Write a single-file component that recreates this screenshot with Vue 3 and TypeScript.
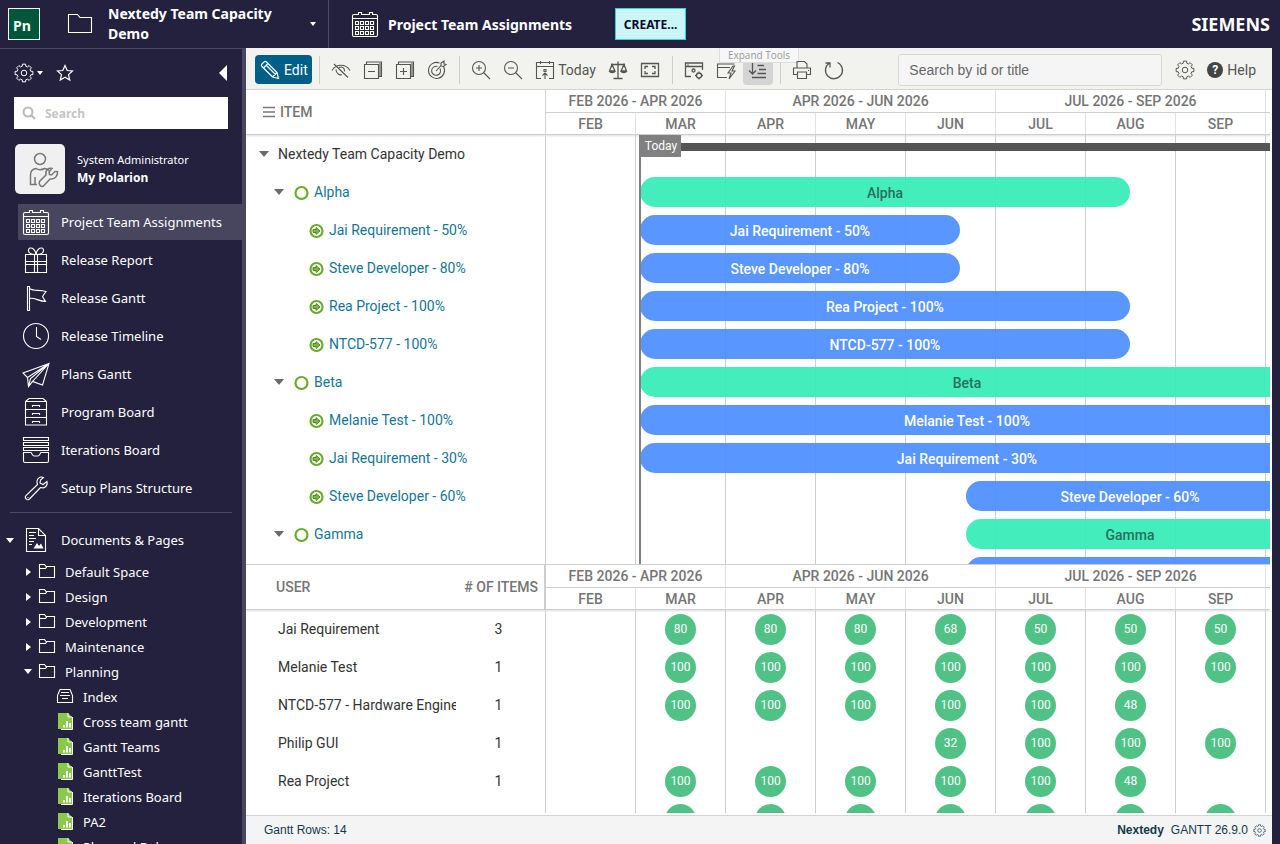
<script setup lang="ts">
import { h, ref } from 'vue'

type Shape = { d: string; size: number; solid?: string; w?: number }

const circle = (x: number, y: number, r: number) =>
  `M${x - r} ${y}a${r} ${r} 0 1 0 ${2 * r} 0a${r} ${r} 0 1 0 ${-2 * r} 0z`

const cog = (c: number, outer: number, inner: number, hole: number) => {
  const pts: string[] = []
  for (let i = 0; i < 8; i++) {
    const a = (i * Math.PI) / 4
    const at = (r: number, o: number) =>
      `${(c + r * Math.cos(a + o)).toFixed(2)} ${(c + r * Math.sin(a + o)).toFixed(2)}`
    pts.push(at(inner, -0.26), at(outer, -0.18), at(outer, 0.18), at(inner, 0.26))
  }
  return `M${pts.join('L')}z${circle(c, c, hole)}`
}

const squares = (x0: number, y0: number) => {
  let d = ''
  for (let r = 0; r < 3; r++)
    for (let c = 0; c < 4; c++) d += `M${x0 + c * 5} ${y0 + r * 5}h3v3h-3z`
  return d
}

const shapes: Record<string, Shape> = {
  calendar: {
    size: 28,
    d: 'M4 4.5H7.500V2.500H10.500V4.500H18.500V2.500H21.500V4.500H25q1.500 0 1.500 1.500V25q0 1.500-1.500 1.500H3q-1.500 0-1.500-1.500V6q0-1.500 1.500-1.500zM1.500 8.500H26.500' + squares(4.5, 11.5),
  },
  gift: {
    size: 28,
    d: 'M3.500 8.500h21v18h-21zM3.500 15.500h21M3.500 18.500h21M12.500 8.500v18M15.500 8.500v18M14 8.500C9 8.500 6 7 6.500 4C7.500 0 13 2 14 8.500C15 2 20.500 0 21.500 4C22 7 19 8.500 14 8.500z',
  },
  flag: { size: 28, d: 'M5.500 2.500h2v24h-2zM7.500 4.500C12 7.500 17 5.500 24 7.500L20.500 12.500L23.500 17.500C17 17.500 12 13 7.500 14.500' },
  clock: { size: 28, d: circle(14, 14, 12.5) + 'M14.500 5v9.500l4.500 3' },
  plane: { size: 28, d: 'M27 3.500L1 13L5.500 17.500L6.500 26.500L10.500 21.500L20.500 25zM27 3.500L5.500 17.500M27 3.500L8.500 18.500L6.500 26.500M27 3.500L10.500 21.500' },
  cabinet: { size: 28, d: 'M3.500 3.500L7 .5H21L24.500 3.500V27H3.500zM3.500 3.500h21M3.500 11.500h21M3.500 19.500h21M10.500 9V7.500h7V9M10.500 17v-1.500h7V17M10.500 25v-1.500h7V25' },
  inbox: { size: 28, d: 'M1.500 1.500h25v3h-25zM1.500 6.500h25v3h-25zM1.500 11.500h25v3h-25zM1.500 16.500H9C10 17 10 20 12 20H16C18 20 18 17 19 16.500H26.500V25q0 1.500-1.500 1.500H3q-1.500 0-1.500-1.500z' },
  wrench: { size: 28, d: 'M21.500 3.500C18 2 13.500 5 15.500 10.500L4 21.500C2 24 5 27 7.500 25L18.500 13.500C22.500 15 26 12 25 7.500L21 10.500L18 9L18.500 6zM5.500 23.500h1' },
  document: {
    size: 28,
    d: 'M4.500 2.500H16.500L23.500 9.500V25.500H4.500zM16.500 2.500V9.500H23.500M7 6.500h7M7 9.500h5M7 12.500h7M7 15.500h5M7 18.500h3',
    solid: 'M11.500 22.500L15 17L17 20L19 17.500L21.500 22.500z',
  },
  folder: { size: 18, d: 'M1.500 1.500H6.500L8 3.500H16.500V14.500H1.500zM1.500 5.500H7.500L9 3.500' },
  bigFolder: { size: 26, d: 'M1.500 3.500H10.500L13 6.500H24.500V21.500H1.500z' },
  index: { size: 18, d: 'M1.500 7.500L4 1.500H14L16.500 7.500V14.500H1.500zM5 4.500h8M4 7.500h10M6 10.500h6' },
  gear: { size: 20, d: cog(10, 9, 7, 2.8), w: 1 },
  star: { size: 18, d: 'M9 1.500L11.200 6.500L16.500 7L12.500 10.600L13.700 16L9 13.200L4.300 16L5.500 10.600L1.500 7L6.800 6.500z', w: 1.2 },
  magnifier: { size: 14, d: circle(6, 6, 4.5) + 'M9.500 9.500L13 13', w: 2 },
  person: {
    size: 34,
    d: circle(17, 8, 5.5) + 'M14 33.500H7.500V24C7.500 19.500 10 18 13 17.500C15 19 19 19 21.500 17.500C23.500 17.500 25 18.500 26 19.500M12 26v7.500M32 20.500L28.500 24L26.500 23.500L26 21L29 17.500C25.500 16.500 22 19 23 24L16.500 30.500C15.500 33.500 18 36.500 20.500 35L27 28C31.500 28.500 35 25.500 34.500 20.500z',
    w: 1.5,
  },
  pencil: { size: 20, d: 'M1.500 4.500L4.500 1.500Q5.500 1 6.500 2L17 12.500L18.500 18.500L12.500 17L2 6.500Q1 5.500 1.500 4.500zM4 7.500L7.500 4M12.500 17L17 12.500M6.500 5.500L15.500 14.500', w: 1.2 },
  eye: { size: 20, d: 'M1 10.500C5 3.500 15 3.500 19 10.500M3 4L17 17.500M5 9.500C5 14 9 15.500 11 14.500M8 7.500C11 6 14 8 13.500 11.500' },
  minusBox: { size: 20, d: 'M1.500 4.500h14v14h-14zM5 11.500h7M3.500 4.500V2H18.500V16.500H15.500M17 3V17' },
  plusBox: { size: 20, d: 'M1.500 4.500h14v14h-14zM5 11.500h7M8.500 8v7M3.500 4.500V2H18.500V16.500H15.500M17 3V17' },
  target: { size: 20, d: 'M16.500 6.500A8 8 0 1 1 12.500 3M13 8.500A4.500 4.500 0 1 1 10.500 6.500M9 11L14 5.500V3L17 1V4L19 4.500L16.500 6.500L14 6' },
  zoomIn: { size: 20, d: circle(8, 8, 6.5) + 'M12.500 12.500L19 19M5 8h6M8 5v6' },
  zoomOut: { size: 20, d: circle(8, 8, 6.5) + 'M12.500 12.500L19 19M5 8h6' },
  today: { size: 20, d: 'M6 18.500H1.500V2.500H18.500V18.500H14M1.500 6.500H18.500M5.500 1v3M14.500 1v3M9 9.500h2v2H9zM10 19V13M7.500 15.500L10 13L12.500 15.500' },
  scales: { size: 20, d: 'M10 1.500V18M5.500 18.500h9M3 4.500H17M4 4.500L1.500 11H7zM16 4.500L13 11H18.500zM1.500 11C2 13 6.500 13 7 11M13 11C13.500 13 18 13 18.500 11', w: 1.3 },
  fit: { size: 20, d: 'M1.500 3.500h17v13h-17zM5 9V6.500H8M12 6.500h3V9M15 11v2.500H12M8 13.500H5V11', w: 1.3 },
  windowGear: { size: 20, d: 'M7 16.500H1.500V3H18.500V10M1.500 6.500H18.500M3.500 5h1' + circle(9.5, 10.5, 1.5) + circle(15, 15.5, 2.5) + 'M15 11.500v1.500M15 18v1.500M11 15.500h1.500M17.500 15.500H19', w: 1.3 },
  flash: { size: 20, d: 'M11 17.500H1.500V4H18.500M1.500 7.500H14M17 6L12 13H15L13 19L19 11H16L18.500 6z' },
  sort: { size: 20, d: 'M4.500 3V14M1 10.500L4.500 14L8 10.500M9.500 5.500H16M11 9.500H18M9.500 13.500H18M4 17.500H18', w: 1.3 },
  print: { size: 20, d: 'M5 8V1.500H12.500L15 4V8M5 14.500H1.500V8H18.500V14.500H15M5.500 12h9v6.500h-9zM16 10.500h1' },
  refresh: { size: 20, d: 'M13.500 2.500A8.500 8.500 0 1 1 5.500 3M1.500 3H6V7.500', w: 1.3 },
}

const Icon = (props: { name: string; size?: number }) => {
  const s = shapes[props.name]
  const px = props.size ?? s.size
  return h('svg', { class: 'icon', viewBox: `0 0 ${s.size} ${s.size}`, width: px, height: px, 'aria-hidden': 'true' }, [
    h('path', { d: s.d, fill: 'none', stroke: 'currentColor', 'stroke-width': s.w ?? 1.1 }),
    s.solid ? h('path', { d: s.solid, fill: 'currentColor' }) : null,
  ])
}
Icon.props = ['name', 'size']

const nav = [
  { label: 'Project Team Assignments', icon: 'calendar' },
  { label: 'Release Report', icon: 'gift' },
  { label: 'Release Gantt', icon: 'flag' },
  { label: 'Release Timeline', icon: 'clock' },
  { label: 'Plans Gantt', icon: 'plane' },
  { label: 'Program Board', icon: 'cabinet' },
  { label: 'Iterations Board', icon: 'inbox' },
  { label: 'Setup Plans Structure', icon: 'wrench' },
]
const active = ref(0)
const spaces = ['Default Space', 'Design', 'Development', 'Maintenance', 'Planning']
const pages = ['Cross team gantt', 'Gantt Teams', 'GanttTest', 'Iterations Board', 'PA2', 'Plan and Roles']

type Tool = { icon?: string; label?: string; text?: string; pressed?: boolean }
const tools: Tool[] = [
  { icon: 'eye', label: 'Hide' },
  { icon: 'minusBox', label: 'Collapse all' },
  { icon: 'plusBox', label: 'Expand all' },
  { icon: 'target', label: 'Focus' },
  {},
  { icon: 'zoomIn', label: 'Zoom in' },
  { icon: 'zoomOut', label: 'Zoom out' },
  { icon: 'today', label: 'Today', text: 'Today' },
  { icon: 'scales', label: 'Balance' },
  { icon: 'fit', label: 'Fit' },
  {},
  { icon: 'windowGear', label: 'View settings' },
  { icon: 'flash', label: 'Quick actions' },
  { icon: 'sort', label: 'Expand Tools', pressed: true },
  {},
  { icon: 'print', label: 'Print' },
  { icon: 'refresh', label: 'Refresh' },
]

const quarters = [
  { label: 'FEB 2026 - APR 2026', span: 2 },
  { label: 'APR 2026 - JUN 2026', span: 3 },
  { label: 'JUL 2026 - SEP 2026', span: 3 },
]
const months = ['FEB', 'MAR', 'APR', 'MAY', 'JUN', 'JUL', 'AUG', 'SEP']

type Row = { label: string; level: number; start: number; end: number }
const rows: Row[] = [
  { label: 'Nextedy Team Capacity Demo', level: 0, start: 94, end: 748 },
  { label: 'Alpha', level: 1, start: 94, end: 584 },
  { label: 'Jai Requirement - 50%', level: 2, start: 94, end: 414 },
  { label: 'Steve Developer - 80%', level: 2, start: 94, end: 414 },
  { label: 'Rea Project - 100%', level: 2, start: 94, end: 584 },
  { label: 'NTCD-577 - 100%', level: 2, start: 94, end: 584 },
  { label: 'Beta', level: 1, start: 94, end: 748 },
  { label: 'Melanie Test - 100%', level: 2, start: 94, end: 748 },
  { label: 'Jai Requirement - 30%', level: 2, start: 94, end: 748 },
  { label: 'Steve Developer - 60%', level: 2, start: 420, end: 748 },
  { label: 'Gamma', level: 1, start: 420, end: 748 },
  { label: '', level: 2, start: 420, end: 748 },
]
const kinds = ['project', 'team', 'member']

type Load = { user: string; items: number | null; load: (number | string | null)[] }
const loads: Load[] = [
  { user: 'Jai Requirement', items: 3, load: [null, 80, 80, 80, 68, 50, 50, 50] },
  { user: 'Melanie Test', items: 1, load: [null, 100, 100, 100, 100, 100, 100, 100] },
  { user: 'NTCD-577 - Hardware Engineer', items: 1, load: [null, 100, 100, 100, 100, 100, 48, null] },
  { user: 'Philip GUI', items: 1, load: [null, null, null, null, 32, 100, 100, 100] },
  { user: 'Rea Project', items: 1, load: [null, 100, 100, 100, 100, 100, 48, null] },
  { user: 'Steve Developer', items: null, load: [null, '', '', '', '', '', '', ''] },
]
</script>

<template>
  <div class="shell">
    <header class="topbar">
      <div class="project">
        <span class="logo">Pn</span>
        <Icon name="bigFolder" />
        <button class="project-name">Nextedy Team Capacity Demo</button>
        <i class="tri down small"></i>
      </div>
      <Icon name="calendar" class="page-icon" />
      <h1>Project Team Assignments</h1>
      <button class="create">CREATE...</button>
      <span class="brand">SIEMENS</span>
    </header>

    <aside class="sidebar">
      <div class="side-tools">
        <button aria-label="Settings"><Icon name="gear" /><i class="tri down small"></i></button>
        <button aria-label="Favorites"><Icon name="star" /></button>
        <button class="collapse" aria-label="Collapse sidebar"><i class="tri back"></i></button>
      </div>
      <label class="side-search">
        <Icon name="magnifier" />
        <input type="search" placeholder="Search" aria-label="Search" />
      </label>
      <a href="#" class="profile">
        <span class="avatar"><Icon name="person" /></span>
        <span>System Administrator<b>My Polarion</b></span>
      </a>
      <nav class="nav">
        <a v-for="(n, i) in nav" :key="n.label" href="#" :class="{ active: active === i }" @click.prevent="active = i">
          <Icon :name="n.icon" />{{ n.label }}
        </a>
      </nav>
      <hr />
      <a href="#" class="docs"><i class="tri down"></i><Icon name="document" />Documents &amp; Pages</a>
      <ul class="spaces">
        <li v-for="s in spaces" :key="s">
          <a href="#"><i class="tri" :class="s === 'Planning' ? 'down' : 'right'"></i><Icon name="folder" />{{ s }}</a>
        </li>
      </ul>
      <ul class="pages">
        <li><a href="#"><Icon name="index" />Index</a></li>
        <li v-for="p in pages" :key="p">
          <a href="#">
            <svg class="icon" viewBox="0 0 18 18" width="18" height="18" aria-hidden="true">
              <path d="M2 0h10l4 4v12H2z" fill="#8bc94a" />
              <path d="M12 0v4h4M16.500 4v12.500H5" fill="none" stroke="#fff" />
              <path d="M7 12h2v2.500H7zM10 8h2v6.500h-2zM13 10h2v4.500h-2z" fill="#fff" />
            </svg>{{ p }}
          </a>
        </li>
      </ul>
    </aside>

    <main class="main">
      <div class="toolbar">
        <button class="edit"><Icon name="pencil" />Edit</button>
        <span class="sep"></span>
        <template v-for="(t, i) in tools" :key="i">
          <button v-if="t.icon" class="tool" :class="{ pressed: t.pressed, wide: t.text }" :aria-label="t.label">
            <Icon :name="t.icon" />{{ t.text }}
            <span v-if="t.pressed" class="tip">Expand Tools</span>
          </button>
          <span v-else class="sep"></span>
        </template>
        <input class="find" type="text" placeholder="Search by id or title" aria-label="Search by id or title" />
        <button class="tool" aria-label="Settings"><Icon name="gear" /></button>
        <button class="help"><span>?</span>Help</button>
      </div>

      <section class="gantt">
        <div class="tree">
          <div class="tree-head">
            <svg class="icon" viewBox="0 0 12 12" width="12" height="12" aria-hidden="true">
              <path d="M0 1.500h12M0 6h12M0 10.500h12" stroke="#777" stroke-width="1.500" />
            </svg>ITEM
          </div>
          <ul>
            <li v-for="(r, i) in rows" :key="i" :style="{ paddingLeft: 10 + 15 * r.level + 'px' }">
              <button v-if="r.level < 2" class="twist" aria-label="Toggle"><i class="tri down"></i></button>
              <span v-else class="twist"></span>
              <svg v-if="r.level" class="icon" viewBox="0 0 15 15" width="15" height="15" aria-hidden="true">
                <circle cx="7.500" cy="8" r="6" fill="#fff" stroke="#6aaa2e" stroke-width="2.200" />
                <path v-if="r.level === 2" d="M4 6.500h3V4.500l4 3.500L7 11.500V9.500H4z" fill="#7ab648" stroke="#4e8c1c" />
              </svg>
              <a v-if="r.level" href="#">{{ r.label }}</a>
              <span v-else>{{ r.label }}</span>
            </li>
          </ul>
        </div>
        <div class="chart">
          <div class="scale quarters">
            <span v-for="q in quarters" :key="q.label" :class="'span-' + q.span">{{ q.label }}</span>
          </div>
          <div class="scale months"><span v-for="m in months" :key="m">{{ m }}</span></div>
          <div class="canvas">
            <div class="now"><span>Today</span></div>
            <div v-for="(r, i) in rows" :key="i" class="lane">
              <div class="bar" :class="kinds[r.level]" :style="{ left: r.start + 'px', width: r.end - r.start + 'px' }">
                <template v-if="r.level">{{ r.label }}</template>
              </div>
            </div>
          </div>
        </div>
      </section>

      <section class="resources">
        <table>
          <colgroup>
            <col class="c-user" /><col class="c-items" />
            <col v-for="m in months" :key="m" class="c-month" /><col />
          </colgroup>
          <thead>
            <tr>
              <th rowspan="2" class="h-user">USER</th>
              <th rowspan="2" class="h-items"># OF ITEMS</th>
              <th v-for="q in quarters" :key="q.label" :colspan="q.span" class="h-quarter">{{ q.label }}</th>
              <th class="h-quarter rest"></th>
            </tr>
            <tr>
              <th v-for="m in months" :key="m" class="h-month">{{ m }}</th>
              <th class="h-month rest"></th>
            </tr>
          </thead>
          <tbody>
            <tr v-for="l in loads" :key="l.user">
              <td class="user"><div>{{ l.user }}</div></td>
              <td class="items">{{ l.items }}</td>
              <td v-for="(v, i) in l.load" :key="i" class="load"><span v-if="v !== null">{{ v }}</span></td>
              <td></td>
            </tr>
          </tbody>
        </table>
      </section>

      <footer class="status">
        <span>Gantt Rows: 14</span>
        <span class="version"><b>Nextedy</b>GANTT 26.9.0<Icon name="gear" :size="13" /></span>
      </footer>
    </main>
  </div>
</template>

<style>
body {
  margin: 0;
  background: #23213d;
}
</style>

<style scoped>
.shell {
  display: grid;
  grid-template: 48px minmax(0, 1fr) / 246px minmax(0, 1fr);
  height: 100vh;
  overflow: hidden;
  background: #23213d;
  color: #fff;
  font-family: 'Noto Sans', 'Open Sans', sans-serif;
  font-size: 13px;
}
.shell *,
.shell *::before {
  box-sizing: border-box;
}
button {
  padding: 0;
  border: 0;
  background: none;
  color: inherit;
  font: inherit;
  cursor: pointer;
}
a {
  color: inherit;
  text-decoration: none;
}
ul {
  margin: 0;
  padding: 0;
  list-style: none;
}
.icon {
  flex: none;
  display: block;
  overflow: visible;
}
.tri {
  flex: none;
  width: 0;
  height: 0;
}
.tri.down {
  border: 4px solid transparent;
  border-top: 5px solid currentColor;
  border-bottom: 0;
}
.tri.down.small {
  border-width: 4px 3px 0;
}
.tri.right {
  border: 4px solid transparent;
  border-left: 5px solid currentColor;
  border-right: 0;
}
.tri.back {
  border: 8px solid transparent;
  border-right: 8px solid #fff;
  border-left: 0;
}

.topbar {
  grid-column: 1 / -1;
  display: flex;
  align-items: center;
  padding: 0 10px 0 8px;
}
.project {
  display: flex;
  align-items: center;
  width: 321px;
  height: 48px;
  padding-right: 12px;
  border-right: 1px solid #4b4963;
}
.logo {
  width: 32px;
  height: 32px;
  margin-right: 27px;
  padding: 7px 0 0 4px;
  border: 1px solid #fff;
  background: #00573a;
  font: 700 14px/20px 'Open Sans', sans-serif;
}
.project-name {
  flex: 1;
  margin-left: 15px;
  padding-right: 20px;
  font-size: 14px;
  line-height: 20px;
  font-weight: 700;
  text-align: left;
}
.page-icon {
  margin: 0 9px 0 22px;
}
h1 {
  margin: 0 43px 0 0;
  font-size: 14px;
  font-weight: 700;
}
.create {
  width: 71px;
  height: 32px;
  border: 1px solid #2fd8d4;
  background: #cbf6f5;
  color: #0a0a30;
  font-size: 12px;
  font-weight: 700;
}
.brand {
  margin-left: auto;
  font-size: 18px;
  font-weight: 700;
}

.sidebar {
  overflow: hidden;
  border-top: 1px solid #4b4963;
  border-right: 4px solid #48455f;
}
.side-tools {
  display: flex;
  align-items: center;
  gap: 13px;
  height: 48px;
  padding: 0 15px 0 14px;
}
.side-tools button {
  display: flex;
  align-items: center;
  gap: 3px;
}
.side-tools .collapse {
  margin-left: auto;
}
.side-search {
  display: flex;
  align-items: center;
  gap: 7px;
  height: 32px;
  margin: 0 14px;
  padding: 0 8px;
  background: #fff;
  color: #bbb;
}
.side-search input {
  flex: 1;
  min-width: 0;
  border: 0;
  outline: 0;
  background: none;
  font: 700 12px 'Noto Sans', sans-serif;
}
.side-search input::placeholder {
  color: #c4c4c4;
}
.profile {
  display: flex;
  align-items: center;
  gap: 12px;
  margin: 15px 15px 10px;
  font-size: 11px;
  line-height: 18px;
}
.profile b {
  display: block;
  font-size: 12px;
}
.avatar {
  display: flex;
  width: 50px;
  height: 50px;
  padding: 7px 8px;
  border-radius: 5px;
  background: #f0f0f0;
  color: #777;
}
.nav {
  display: flex;
  flex-direction: column;
  gap: 2px;
  padding-left: 18px;
}
.nav a {
  display: flex;
  align-items: center;
  gap: 11px;
  height: 36px;
  padding-left: 4px;
}
.nav .active {
  background: #48465f;
}
hr {
  height: 1px;
  margin: 6px 10px 8px;
  border: 0;
  background: #4b4963;
}
.docs {
  display: flex;
  align-items: center;
  height: 38px;
  padding-left: 6px;
}
.docs .icon {
  margin: 0 11px 0 8px;
}
.spaces a,
.pages a {
  display: flex;
  align-items: center;
  height: 25px;
}
.spaces a {
  padding-left: 24px;
}
.spaces .tri {
  margin: 0 7px 0 2px;
}
.spaces .tri.down {
  margin: 0 6px 0 0;
}
.spaces .icon {
  margin-right: 9px;
}
.pages a {
  gap: 9px;
  padding-left: 56px;
}

.main {
  display: flex;
  flex-direction: column;
  min-width: 0;
  margin-right: 8px;
  background: #fff;
  color: #333;
  font: 14px/20px Roboto, sans-serif;
}
.toolbar {
  display: flex;
  align-items: center;
  flex: none;
  height: 42px;
  padding: 2px 16px 0 9px;
  border-bottom: 1px solid #d3d3d0;
  background: #f2f2ee;
  color: #555;
}
.edit {
  display: flex;
  align-items: center;
  gap: 4px;
  width: 57px;
  height: 29px;
  margin-right: 1px;
  padding-left: 5px;
  border-radius: 4px;
  background: #005f87;
  color: #fff;
}
.sep {
  flex: none;
  width: 1px;
  height: 28px;
  margin: 0 5px 0 6px;
  background: #ccc;
}
.tool {
  position: relative;
  display: flex;
  flex: none;
  align-items: center;
  justify-content: center;
  gap: 3px;
  width: 32px;
  height: 30px;
}
.tool.wide {
  width: 73px;
}
.tool.pressed::before {
  content: '';
  position: absolute;
  inset: 0 1px;
  border-radius: 4px;
  background: #d4d4d4;
}
.tool.pressed .icon {
  position: relative;
}
.tip {
  position: absolute;
  top: -7px;
  left: -23px;
  width: 80px;
  border: 1px solid #ddd;
  border-top: 0;
  background: #f7f7f7;
  color: #999;
  font: 10px/14px 'Open Sans', sans-serif;
}
.find {
  width: 264px;
  height: 32px;
  margin: 0 7px 0 auto;
  padding: 0 10px;
  border: 1px solid #d8d8d8;
  border-radius: 3px;
  background: #f5f5f5;
  font: 14px 'Liberation Sans', sans-serif;
}
.find::placeholder {
  color: #666;
}
.help {
  display: flex;
  align-items: center;
  gap: 4px;
  margin-left: 6px;
}
.help span {
  width: 16px;
  height: 16px;
  border-radius: 50%;
  background: #444;
  color: #fff;
  font: 700 12px/16px Roboto, sans-serif;
}

.gantt {
  display: grid;
  grid-template-columns: 300px minmax(0, 1fr);
  flex: 1;
  min-height: 0;
  margin-right: 2px;
  overflow: hidden;
}
.tree {
  border-right: 1px solid #cecece;
}
.tree-head {
  display: flex;
  align-items: center;
  gap: 5px;
  height: 45px;
  padding-left: 17px;
  border-bottom: 1px solid #cecece;
  box-shadow: 0 1px 2px #ddd;
  color: #757575;
  font-weight: 500;
}
.tree li {
  display: flex;
  align-items: center;
  height: 38px;
  white-space: nowrap;
}
.tree li .icon {
  margin: 0 5px 0 1px;
}
.tree a {
  color: #147595;
}
.twist {
  display: flex;
  justify-content: center;
  width: 16px;
  margin-right: 6px;
  color: #6b6b6b;
}
.twist .tri.down {
  border-width: 6px 5px 0;
}
.chart {
  min-width: 0;
  overflow: hidden;
}
.scale {
  display: flex;
  color: #757575;
  font-weight: 500;
  text-align: center;
  border-bottom: 1px solid #cecece;
}
.scale span {
  flex: none;
  width: 90px;
  border-right: 1px solid #e2e2e2;
}
.scale .span-2 {
  width: 180px;
}
.scale .span-3 {
  width: 270px;
}
.quarters {
  height: 23px;
  line-height: 22px;
}
.months {
  height: 22px;
  line-height: 22px;
  box-shadow: 0 1px 2px #ddd;
}
.canvas {
  position: relative;
  background: repeating-linear-gradient(to right, transparent 0 89px, #cecece 89px 90px);
}
.lane {
  position: relative;
  height: 38px;
}
.bar {
  position: absolute;
  top: 4px;
  height: 30px;
  border-radius: 15px;
  font-weight: 500;
  line-height: 32px;
  text-align: center;
  white-space: nowrap;
}
.bar.project {
  top: 8px;
  height: 8px;
  border-radius: 0;
  background: #555;
}
.bar.team {
  background: rgba(55, 236, 184, 0.94);
  color: #2b6f5d;
}
.bar.member {
  background: rgba(76, 142, 255, 0.93);
  color: #fff;
}
.now {
  position: absolute;
  z-index: 1;
  top: 0;
  bottom: 0;
  left: 93px;
  border-left: 2px solid #808080;
}
.now span {
  display: block;
  width: 40px;
  height: 22px;
  background: #808080;
  color: #fff;
  font-size: 12px;
  line-height: 22px;
  text-align: center;
}

.resources {
  flex: none;
  height: 249px;
  margin: 0 2px 2px 0;
  overflow: hidden;
  border-top: 1px solid #cecece;
}
table {
  width: 100%;
  table-layout: fixed;
  border-collapse: separate;
  border-spacing: 0;
}
.c-user {
  width: 210px;
}
.c-items {
  width: 90px;
}
.c-month {
  width: 90px;
}
th,
td {
  padding: 0;
}
thead {
  box-shadow: 0 1px 2px #ddd;
}
th {
  border-right: 1px solid #e2e2e2;
  border-bottom: 1px solid #cecece;
  color: #757575;
  font-weight: 500;
}
.h-quarter {
  height: 23px;
}
.h-month {
  height: 22px;
}
.h-user {
  padding-left: 30px;
  border-right: 0;
  text-align: left;
}
.h-items {
  padding-right: 6px;
  border-right: 2px solid #cecece;
  text-align: right;
  white-space: nowrap;
}
.rest {
  border-right: 0;
}
td {
  height: 38px;
}
.user {
  padding-left: 32px;
}
.user div {
  overflow: hidden;
  white-space: nowrap;
}
.items {
  padding-right: 4px;
  border-right: 1px solid #cecece;
  text-align: center;
}
.load {
  border-right: 1px solid #cecece;
}
.load span {
  display: block;
  width: 31px;
  height: 31px;
  margin: 0 auto;
  border-radius: 50%;
  background: #51c285;
  color: #fff;
  font-size: 12px;
  line-height: 31px;
  text-align: center;
}

.status {
  display: flex;
  align-items: center;
  justify-content: space-between;
  flex: none;
  height: 29px;
  padding: 0 6px 0 18px;
  border-top: 1px solid #d3d3d3;
  background: #f4f4f4;
  color: #12394f;
  font: 12px 'Liberation Sans', sans-serif;
}
.version {
  display: flex;
  align-items: center;
}
.version b {
  margin-right: 7px;
}
.version .icon {
  margin-left: 5px;
}
</style>
